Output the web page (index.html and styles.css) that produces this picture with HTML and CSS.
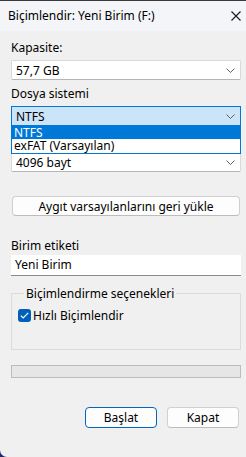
FILE: index.html
```
<!DOCTYPE html>
<html lang="tr">
<head>
  <meta charset="UTF-8" />
  <title>Biçimlendir</title>
  <link rel="stylesheet" href="styles.css">
</head>
<body>
  <div class="window">
    <!-- Title bar -->
    <div class="titlebar">
      <span class="title">Biçimlendir: Yeni Birim (F:)</span>
      <svg class="close" width="10" height="10" viewBox="0 0 10 10">
        <path d="M0.5 0.5 L9.5 9.5 M9.5 0.5 L0.5 9.5" stroke="#1a1a1a" stroke-width="1.1" fill="none"/>
      </svg>
    </div>

    <div class="content">
      <div class="field">
        <label>Kapasite:</label>
        <div class="combo">
          <span>57,7 GB</span>
          <svg class="chev" width="9" height="5" viewBox="0 0 9 5"><path d="M0.5 0.5 L4.5 4.5 L8.5 0.5" stroke="#606060" fill="none"/></svg>
        </div>
      </div>

      <div class="field">
        <label>Dosya sistemi</label>
        <div class="combo-wrap">
          <div class="combo open">
            <span>NTFS</span>
            <svg class="chev" width="9" height="5" viewBox="0 0 9 5"><path d="M0.5 0.5 L4.5 4.5 L8.5 0.5" stroke="#606060" fill="none"/></svg>
          </div>
          <!-- open drop-down list -->
          <ul class="dropdown">
            <li class="selected">NTFS</li>
            <li>exFAT (Varsayılan)</li>
          </ul>
        </div>
      </div>

      <div class="field">
        <!-- label sits under the open list -->
        <label class="covered">Ayırma birimi boyutu</label>
        <div class="combo">
          <span>4096 bayt</span>
          <svg class="chev" width="9" height="5" viewBox="0 0 9 5"><path d="M0.5 0.5 L4.5 4.5 L8.5 0.5" stroke="#606060" fill="none"/></svg>
        </div>
      </div>

      <button class="btn wide">Aygıt varsayılanlarını geri yükle</button>

      <div class="field label-field">
        <label>Birim etiketi</label>
        <div class="textbox">Yeni Birim</div>
      </div>

      <fieldset class="group">
        <legend>Biçimlendirme seçenekleri</legend>
        <div class="check">
          <span class="box">
            <svg width="9" height="7" viewBox="0 0 9 7"><path d="M0.8 3.6 L3.2 6 L8.2 0.9" stroke="#fff" stroke-width="1.2" fill="none"/></svg>
          </span>
          <span>Hızlı Biçimlendir</span>
        </div>
      </fieldset>

      <div class="progress"></div>

      <div class="actions">
        <button class="btn primary">Başlat</button>
        <button class="btn">Kapat</button>
      </div>
    </div>
  </div>
</body>
</html>
```

FILE: styles.css
```
* {
  margin: 0;
  padding: 0;
  box-sizing: border-box;
}
html, body {
  width: 246px;
  height: 457px;
  background: #1c2a6b;
  overflow: hidden;
}
body {
  font-family: 'Noto Sans', sans-serif;
  font-size: 12px;
  color: #000;
}
/* Window frame */
.window {
  width: 246px;
  height: 457px;
  background: #f0f0f0;
  border-top: 1px solid #3a3a3a;
  border-bottom-left-radius: 7px;
  display: flex;
  flex-direction: column;
}
.titlebar {
  height: 30px;
  background: #f3f5f9;
  display: flex;
  align-items: center;
  justify-content: space-between;
  padding: 0 5px 1px 8px;
}
.title {
  line-height: 15px;
}
.close {
  display: block;
}
/* Main area */
.content {
  display: flex;
  flex-direction: column;
  padding: 9px 5px 0 11px;
}
.field {
  display: flex;
  flex-direction: column;
  margin-bottom: 6px;
}
.field label {
  line-height: 15px;
  margin-bottom: 5px;
}
.field label.covered {
  visibility: hidden;
}
.combo {
  height: 20px;
  background: #fff;
  border: 1px solid #d9d9d9;
  border-bottom-color: #b5b5b5;
  border-radius: 2px;
  display: flex;
  align-items: center;
  justify-content: space-between;
  padding: 0 5px 0 4px;
  line-height: 15px;
}
.combo.open {
  background: #cce4f7;
  border-color: #0078d7;
  border-radius: 0;
}
.combo-wrap {
  position: relative;
}
.dropdown {
  list-style: none;
  position: absolute;
  left: 0;
  right: 0;
  top: 20px;
  z-index: 10;
  background: #fff;
  border: 1px solid #0078d7;
  border-top: none;
  padding-bottom: 1px;
}
.dropdown li {
  height: 13px;
  line-height: 13px;
  padding-left: 2px;
}
.dropdown li.selected {
  background: #0078d7;
  color: #fff;
}
/* Buttons */
.btn {
  font-family: inherit;
  font-size: 12px;
  color: #000;
  height: 21px;
  background: #fdfdfd;
  border: 1px solid #d0d0d0;
  border-bottom-color: #bcbcbc;
  border-radius: 4px;
  line-height: 15px;
}
.btn.wide {
  margin: 18px 1px 0 1px;
  height: 20px;
}
.label-field {
  margin-top: 22px;
  margin-bottom: 0;
}
.label-field label {
  margin-bottom: 2px;
}
.textbox {
  height: 21px;
  background: #fff;
  border-bottom: 1px solid #8a8a8a;
  padding: 0 4px;
  line-height: 20px;
}
/* Group box */
.group {
  border: 1px solid #dcdcdc;
  margin-top: 10px;
  height: 64px;
  padding: 7px 6px 0 6px;
}
.group legend {
  margin-left: 6px;
  padding: 0 2px;
  line-height: 15px;
}
.check {
  display: flex;
  align-items: center;
  gap: 2px;
  line-height: 15px;
}
.box {
  width: 13px;
  height: 13px;
  background: #005fb8;
  border-radius: 3px;
  display: flex;
  align-items: center;
  justify-content: center;
}
.progress {
  margin-top: 15px;
  height: 13px;
  background: #e6e6e6;
  border: 1px solid #bcbcbc;
}
.actions {
  display: flex;
  justify-content: flex-end;
  gap: 10px;
  margin-top: 29px;
  padding-right: 2px;
}
.actions .btn {
  width: 72px;
}
.btn.primary {
  border-color: #0067c0;
}
```
